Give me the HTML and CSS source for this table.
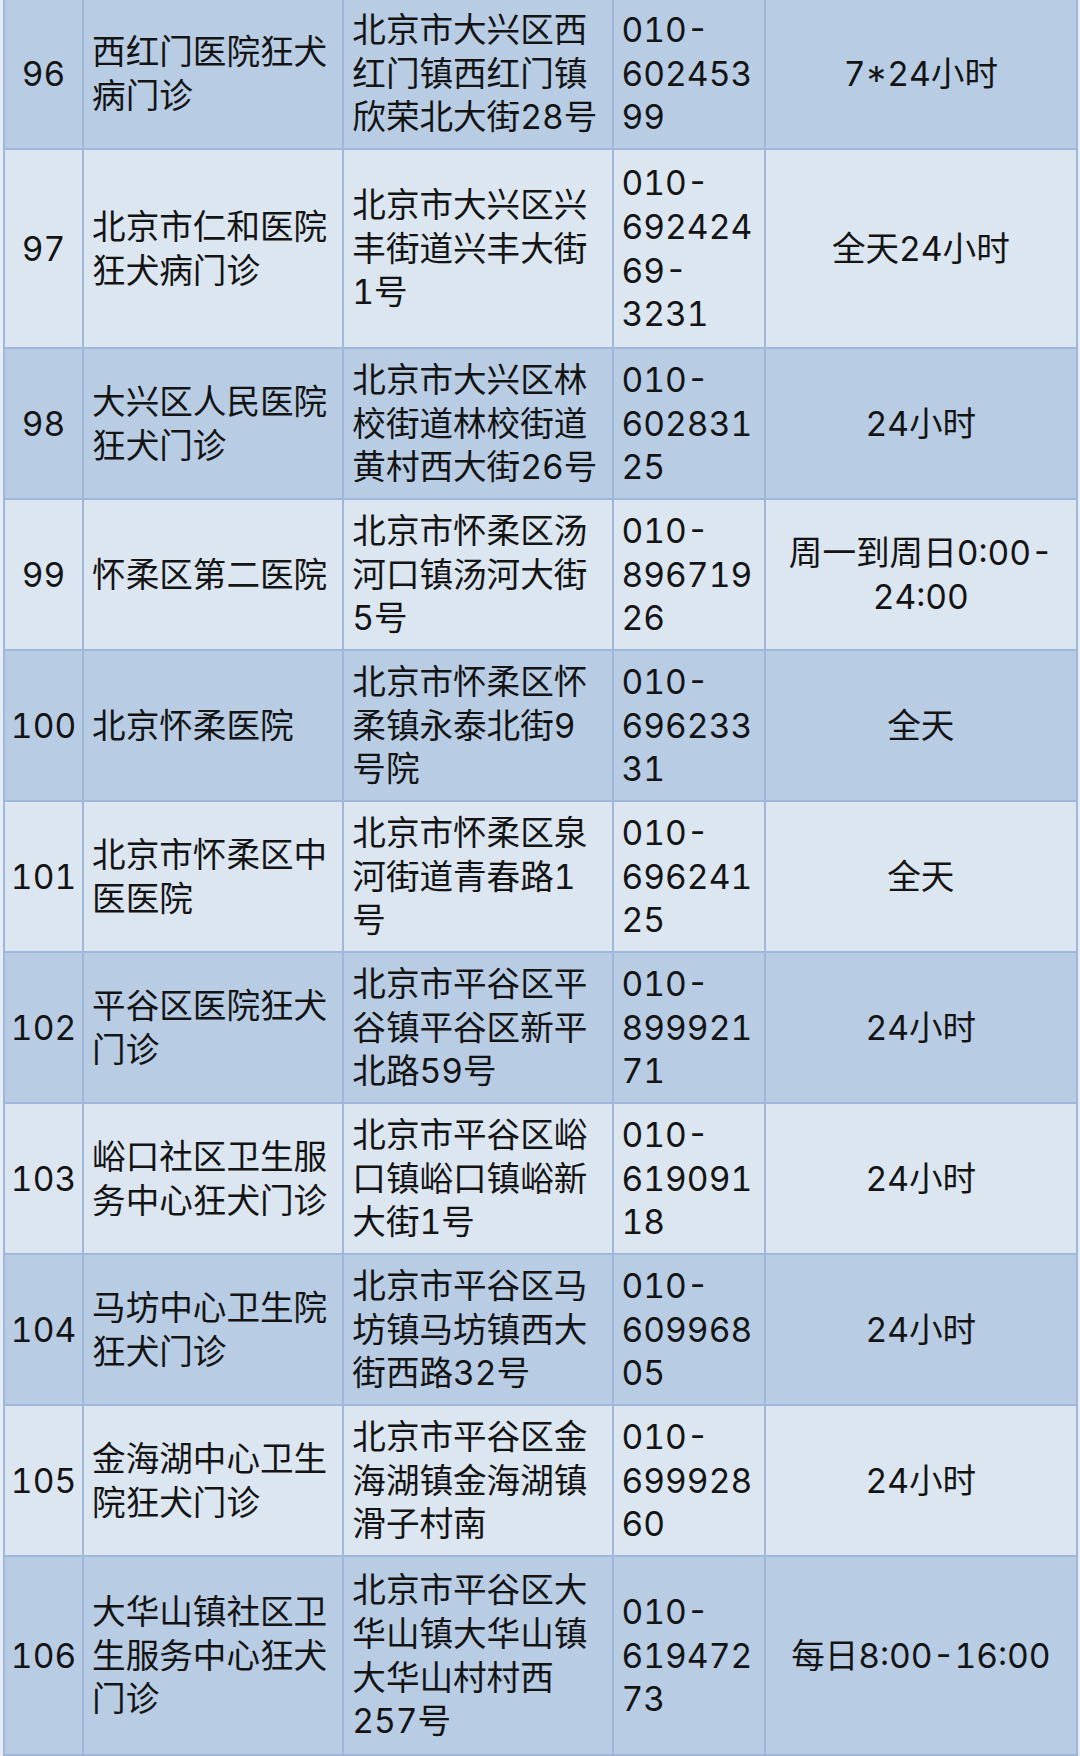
FILE: index.html
```html
<!DOCTYPE html>
<html lang="zh-CN">
<head>
<meta charset="utf-8">
<title>狂犬病门诊</title>
<link rel="stylesheet" href="styles.css">
</head>
<body>
<div class="sheet">
<table class="clinics">
  <colgroup>
    <col class="c-no"><col class="c-name"><col class="c-addr"><col class="c-tel"><col class="c-time">
  </colgroup>
  <tbody>
    <tr class="dark"><td class="no">96</td><td>西红门医院狂犬病门诊</td><td>北京市大兴区西红门镇西红门镇欣荣北大街28号</td><td class="tel">010-60245399</td><td class="time">7*24小时</td></tr>
    <tr class="light tall"><td class="no">97</td><td>北京市仁和医院狂犬病门诊</td><td>北京市大兴区兴丰街道兴丰大街1号</td><td class="tel">010-69242469-3231</td><td class="time">全天24小时</td></tr>
    <tr class="dark"><td class="no">98</td><td>大兴区人民医院狂犬门诊</td><td>北京市大兴区林校街道林校街道黄村西大街26号</td><td class="tel">010-60283125</td><td class="time">24小时</td></tr>
    <tr class="light"><td class="no">99</td><td>怀柔区第二医院</td><td>北京市怀柔区汤河口镇汤河大街5号</td><td class="tel">010-89671926</td><td class="time">周一到周日0:00-24:00</td></tr>
    <tr class="dark"><td class="no">100</td><td>北京怀柔医院</td><td>北京市怀柔区怀柔镇永泰北街9号院</td><td class="tel">010-69623331</td><td class="time">全天</td></tr>
    <tr class="light"><td class="no">101</td><td>北京市怀柔区中医医院</td><td>北京市怀柔区泉河街道青春路1号</td><td class="tel">010-69624125</td><td class="time">全天</td></tr>
    <tr class="dark"><td class="no">102</td><td>平谷区医院狂犬门诊</td><td>北京市平谷区平谷镇平谷区新平北路59号</td><td class="tel">010-89992171</td><td class="time">24小时</td></tr>
    <tr class="light"><td class="no">103</td><td>峪口社区卫生服务中心狂犬门诊</td><td>北京市平谷区峪口镇峪口镇峪新大街1号</td><td class="tel">010-61909118</td><td class="time">24小时</td></tr>
    <tr class="dark"><td class="no">104</td><td>马坊中心卫生院狂犬门诊</td><td>北京市平谷区马坊镇马坊镇西大街西路32号</td><td class="tel">010-60996805</td><td class="time">24小时</td></tr>
    <tr class="light"><td class="no">105</td><td>金海湖中心卫生院狂犬门诊</td><td>北京市平谷区金海湖镇金海湖镇滑子村南</td><td class="tel">010-69992860</td><td class="time">24小时</td></tr>
    <tr class="dark tall"><td class="no">106</td><td>大华山镇社区卫生服务中心狂犬门诊</td><td>北京市平谷区大华山镇大华山镇大华山村村西257号</td><td class="tel">010-61947273</td><td class="time">每日8:00-16:00</td></tr>
  </tbody>
</table>
</div>
</body>
</html>
```
FILE: styles.css
```css
html, body {
  margin: 0;
  padding: 0;
  background: #e6edf6;
}
body {
  width: 1080px;
  height: 1756px;
  overflow: hidden;
}
.sheet {
  padding-left: 3px;
}
.clinics {
  margin-top: -3px;
  width: 1075px;
  table-layout: fixed;
  border-collapse: collapse;
  font-family: Inter, "Noto Sans CJK SC", sans-serif;
  font-size: 33.6px;
  line-height: 43.6px;
  font-variant-numeric: tabular-nums;
  color: #141414;
}
.c-no { width: 79px; }
.c-name { width: 260px; }
.c-addr { width: 269px; }
.c-tel { width: 152px; }
.c-time { width: 312px; }
.clinics td {
  border: 2px solid #9fb7da;
  padding: 0 7px 0 8px;
  height: 151px;
  box-sizing: border-box;
  vertical-align: middle;
  text-align: left;
  overflow-wrap: break-word;
  word-wrap: break-word;
}
.clinics .tall td {
  height: 199px;
}
.clinics td.no {
  padding: 0 1px;
  text-align: center;
}
.clinics td.time {
  text-align: center;
  padding: 0 10px;
}
.clinics td.tel {
  padding: 0 8px 0 8px;
}
.dark td { background: #b8cce4; }
.light td { background: #dce6f1; }
```
